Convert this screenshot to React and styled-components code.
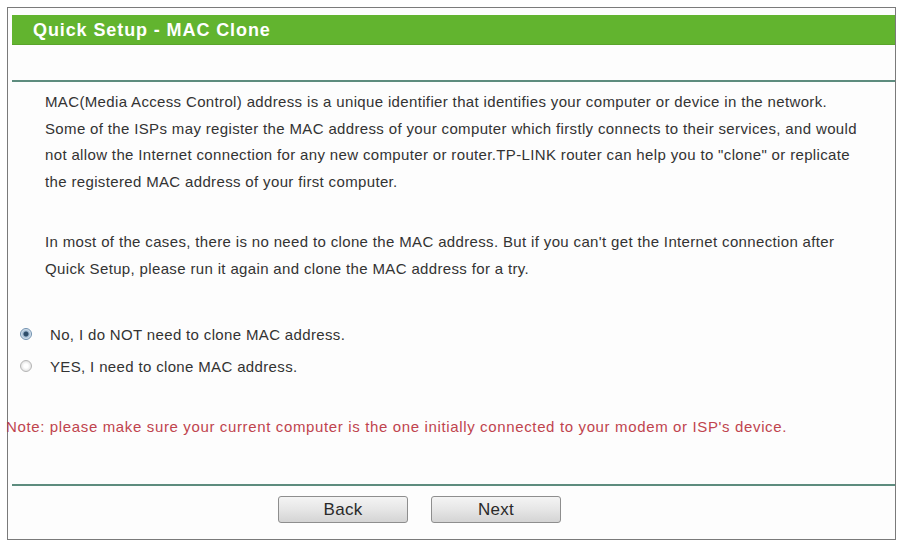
import React, { useState } from "react";
import styled, { createGlobalStyle } from "styled-components";

const GlobalStyle = createGlobalStyle`
  body {
    margin: 0;
    background: #ffffff;
    font-family: "Liberation Sans", Arial, sans-serif;
  }
`;

export default function App() {
  const [clone, setClone] = useState(false);

  return (
    <>
      <GlobalStyle />
      <Page>
        <Frame>
          <Header>Quick Setup - MAC Clone</Header>
          <Spacer />
          <Divider />
          <Paragraph>
            MAC(Media Access Control) address is a unique identifier that identifies your computer or device in the network.
            <br />
            Some of the ISPs may register the MAC address of your computer which firstly connects to their services, and would
            <br />
            not allow the Internet connection for any new computer or router.TP-LINK router can help you to "clone" or replicate
            <br />
            the registered MAC address of your first computer.
          </Paragraph>
          <Paragraph $top={33}>
            In most of the cases, there is no need to clone the MAC address. But if you can't get the Internet connection after
            <br />
            Quick Setup, please run it again and clone the MAC address for a try.
          </Paragraph>
          <Options>
            <Option onClick={() => setClone(false)}>
              <Radio $checked={!clone} />
              No, I do NOT need to clone MAC address.
            </Option>
            <Option onClick={() => setClone(true)}>
              <Radio $checked={clone} />
              YES, I need to clone MAC address.
            </Option>
          </Options>
          <Note>
            Note: please make sure your current computer is the one initially connected to your modem or ISP's device.
          </Note>
          <Divider />
          <Buttons>
            <Button>Back</Button>
            <Button>Next</Button>
          </Buttons>
        </Frame>
      </Page>
    </>
  );
}

const Page = styled.div`
  padding: 7px 0 0 7px;
`;

const Frame = styled.div`
  width: 889px;
  height: 533px;
  border: 1px solid #7a7a7a;
  padding: 7px 0 0 4px;
  box-sizing: border-box;
  display: flex;
  flex-direction: column;
  background: #fdfdfd;
`;

const Header = styled.div`
  height: 30px;
  background: #62b42f;
  color: #ffffff;
  font-size: 18px;
  font-weight: bold;
  letter-spacing: 0.9px;
  display: flex;
  align-items: center;
  padding-left: 21px;
  box-shadow: inset 0 -1px 0 #5aa42b;
`;

const Spacer = styled.div`
  height: 35px;
`;

const Divider = styled.div`
  height: 2px;
  background: #5d8c7e;
`;

const Paragraph = styled.p`
  margin: ${(p) => p.$top ?? 7}px 0 0 33px;
  font-size: 15px;
  letter-spacing: 0.35px;
  line-height: 26.7px;
  color: #333333;
  white-space: nowrap;
`;

const Options = styled.div`
  margin-top: 42px;
  display: flex;
  flex-direction: column;
  gap: 12px;
`;

const Option = styled.label`
  height: 20px;
  display: flex;
  align-items: center;
  gap: 18px;
  padding-left: 8px;
  font-size: 15px;
  letter-spacing: 0.35px;
  color: #333333;
  cursor: pointer;
`;

const Radio = styled.span`
  width: 10px;
  height: 10px;
  border-radius: 50%;
  border: 1px solid ${(p) => (p.$checked ? "#6e8fae" : "#b5b5b5")};
  background: ${(p) =>
    p.$checked
      ? "radial-gradient(circle, #2e4d6a 0 2px, #9db7d0 3px, #dfe9f2 5px)"
      : "radial-gradient(circle, #ffffff 0 2px, #e4e4e4 5px)"};
  flex-shrink: 0;
`;

const Note = styled.div`
  margin: 41px 0 47px -6px;
  height: 20px;
  line-height: 20px;
  font-size: 15px;
  letter-spacing: 0.64px;
  color: #c0444e;
  white-space: nowrap;
`;

const Buttons = styled.div`
  display: flex;
  justify-content: center;
  gap: 23px;
  margin-top: 10px;
  padding-right: 68px;
`;

const Button = styled.button`
  width: 130px;
  height: 27px;
  border: 1px solid #8e8e8e;
  border-radius: 3px;
  background: linear-gradient(#f4f4f4, #e6e6e6 50%, #d4d4d4);
  font-family: "Liberation Sans", Arial, sans-serif;
  font-size: 17px;
  letter-spacing: 0.3px;
  color: #2a2a2a;
  padding: 0;
`;
